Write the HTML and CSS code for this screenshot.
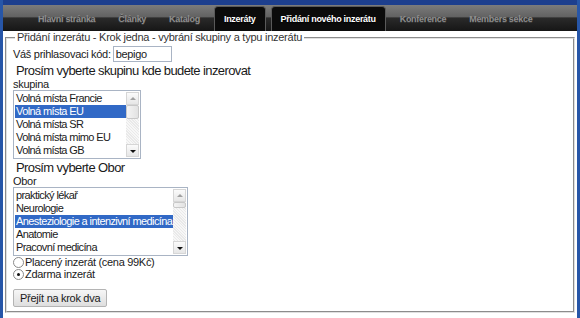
FILE: index.html
```html
<html>
<head>
    <meta charset="utf-8">
    <link rel="stylesheet" href="styles.css">
</head>
<body>
<div class="page">
    <div class="topbar"></div>
    <ul class="nav">
        <li class="tab">Hlavní stránka</li>
        <li class="tab">Články</li>
        <li class="tab">Katalog</li>
        <li class="tab active">Inzeráty</li>
        <li class="tab active">Přidání nového inzerátu</li>
        <li class="tab">Konference</li>
        <li class="tab">Members sekce</li>
    </ul>

    <form class="main">
        <fieldset class="step">
            <legend>Přidání inzerátu - Krok jedna - vybrání skupiny a typu inzerátu</legend>

            <div class="row">
                <label>Váš prihlasovaci kód:</label>
                <input class="code" type="text" value="bepigo">
            </div>

            <div class="prompt">Prosím vyberte skupinu kde budete inzerovat</div>
            <div class="caption">skupina</div>
            <div class="listbox group">
                <ul class="options">
                    <li>Volná místa Francie</li>
                    <li class="selected">Volná místa EU</li>
                    <li>Volná místa SR</li>
                    <li>Volná místa mimo EU</li>
                    <li>Volná místa GB</li>
                </ul>
                <div class="scrollbar">
                    <div class="arrow up"></div>
                    <div class="track">
                        <div class="thumb big"></div>
                    </div>
                    <div class="arrow down"></div>
                </div>
            </div>

            <div class="prompt">Prosím vyberte Obor</div>
            <div class="caption">Obor</div>
            <div class="listbox field">
                <ul class="options">
                    <li>praktický lékař</li>
                    <li>Neurologie</li>
                    <li class="selected">Anesteziologie a intenzivní medicína</li>
                    <li>Anatomie</li>
                    <li>Pracovní medicína</li>
                </ul>
                <div class="scrollbar">
                    <div class="arrow up"></div>
                    <div class="track">
                        <div class="thumb small"></div>
                    </div>
                    <div class="arrow down"></div>
                </div>
            </div>

            <label class="choice"><span class="radio"></span>Placený inzerát (cena 99Kč)</label>
            <label class="choice"><span class="radio checked"></span>Zdarma inzerát</label>

            <div class="actions">
                <button class="btn" type="button">Přejít na krok dva</button>
            </div>
        </fieldset>
    </form>
</div>
</body>
</html>
```

FILE: styles.css
```css
body {
    margin: 0;
    background: #ffffff;
    font-family: "Liberation Sans", Arial, sans-serif;
    color: #1a1a1a;
}

.page {
    width: 580px;
    height: 318px;
    box-sizing: border-box;
    border-left: 3px solid #2756a8;
    border-right: 3px solid #2756a8;
    overflow: hidden;
}

.topbar {
    height: 5px;
    background: #1d3f8e;
}

/* navigation */
.nav {
    display: flex;
    gap: 5px;
    height: 26px;
    margin: 0;
    padding: 0 0 0 26px;
    list-style: none;
    background: linear-gradient(#7c7c7c 0, #626262 45%, #2a2a2a 50%, #161616 100%);
}

.tab {
    display: flex;
    align-items: center;
    padding: 0 9px;
    margin-top: 1px;
    font-size: 9px;
    letter-spacing: -0.3px;
    font-weight: bold;
    white-space: nowrap;
    color: #8e8e8e;
    text-shadow: 0 1px 0 #3a3a3a;
}

.tab.active {
    color: #ffffff;
    background: #0b0b0b;
    border: 1px solid #5a5a5a;
    border-bottom: 0;
    border-radius: 4px 4px 0 0;
    text-shadow: 0 1px 1px #000;
}

/* form */
.main {
    margin: 0;
    padding: 0 2px 0 2px;
}

.step {
    margin: 0;
    padding: 0 6px 4px 6px;
    height: 282px;
    box-sizing: border-box;
    border: 2px groove #e0e0e0;
    font-size: 11px;
}

.step legend {
    padding: 0 2px;
    margin-left: 2px;
    line-height: 13px;
    letter-spacing: -0.25px;
    color: #333;
}

.row {
    display: flex;
    align-items: center;
    margin-top: 2px;
    letter-spacing: -0.3px;
}

.row label {
    margin-right: 2px;
}

.code {
    width: 59px;
    height: 16px;
    box-sizing: border-box;
    border: 1px solid #a9b4c4;
    padding: 0 2px;
    font: 11px "Liberation Sans", Arial, sans-serif;
    letter-spacing: -0.3px;
    color: #1a1a1a;
}

.prompt {
    margin: 2px 0 0 3px;
    font-size: 13px;
    line-height: 14px;
    letter-spacing: -0.6px;
}

.caption {
    line-height: 12px;
    letter-spacing: -0.3px;
}

.listbox {
    display: flex;
    border: 1px solid #a9b4c4;
    padding: 1px;
    background: #fff;
}

.listbox.group {
    width: 124px;
}

.listbox.field {
    width: 171px;
}

.options {
    flex: 1;
    min-width: 0;
    overflow: hidden;
    margin: 0;
    padding: 0;
    list-style: none;
    font-size: 11px;
    letter-spacing: -0.6px;
}

.options li {
    height: 13px;
    line-height: 13px;
    padding-left: 1px;
    white-space: nowrap;
}

.options li.selected {
    background: #3169c6;
    color: #fff;
}

.scrollbar {
    display: flex;
    flex-direction: column;
    width: 13px;
}

.arrow {
    height: 13px;
    box-sizing: border-box;
    border: 1px solid #d6d6d6;
    background: linear-gradient(#fbfbfb, #e6e6e6);
    position: relative;
}

.arrow::after {
    content: "";
    position: absolute;
    left: 3px;
    width: 0;
    height: 0;
    border-left: 3px solid transparent;
    border-right: 3px solid transparent;
}

.arrow.up::after {
    top: 4px;
    border-bottom: 3px solid #a0a0a0;
}

.arrow.down::after {
    top: 5px;
    border-top: 3px solid #111;
}

.track {
    flex: 1;
    background-color: #f0f0f0;
    background-image: repeating-linear-gradient(45deg, #f7f7f7 0 1px, #e9e9e9 1px 2px);
}

.thumb {
    box-sizing: border-box;
    border: 1px solid #c8c8c8;
    border-radius: 2px;
    background: linear-gradient(90deg, #f4f4f4, #e2e2e2);
}

.thumb.big {
    height: 14px;
}

.thumb.small {
    height: 6px;
}

.choice {
    display: flex;
    align-items: center;
    height: 12px;
    line-height: 12px;
    letter-spacing: -0.3px;
}

.radio {
    width: 9px;
    height: 9px;
    margin-right: 1px;
    border: 1px solid #8a8a8a;
    border-radius: 50%;
    background: #fff;
    position: relative;
}

.radio.checked::after {
    content: "";
    position: absolute;
    left: 3px;
    top: 3px;
    width: 3px;
    height: 3px;
    border-radius: 50%;
    background: #111;
}

.actions {
    margin-top: 9px;
}

.btn {
    height: 18px;
    padding: 0 6px;
    border: 1px solid #b4b4b4;
    border-radius: 2px;
    background: linear-gradient(#f6f6f6, #dedede);
    font: 11px "Liberation Sans", Arial, sans-serif;
    letter-spacing: -0.3px;
    color: #1a1a1a;
}
```
